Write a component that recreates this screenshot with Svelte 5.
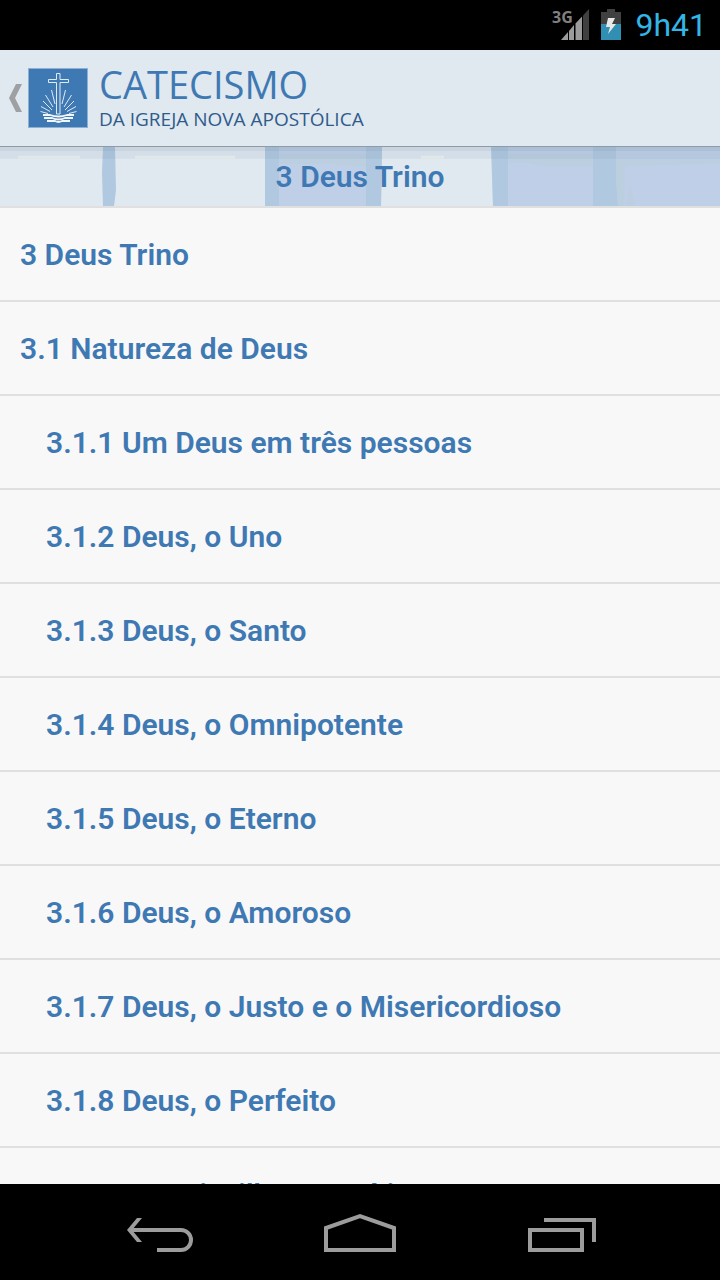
<script>
  const chapter = '3 Deus Trino';

  const sections = [
    { number: '3', title: 'Deus Trino', level: 1 },
    { number: '3.1', title: 'Natureza de Deus', level: 1 },
    { number: '3.1.1', title: 'Um Deus em três pessoas', level: 2 },
    { number: '3.1.2', title: 'Deus, o Uno', level: 2 },
    { number: '3.1.3', title: 'Deus, o Santo', level: 2 },
    { number: '3.1.4', title: 'Deus, o Omnipotente', level: 2 },
    { number: '3.1.5', title: 'Deus, o Eterno', level: 2 },
    { number: '3.1.6', title: 'Deus, o Amoroso', level: 2 },
    { number: '3.1.7', title: 'Deus, o Justo e o Misericordioso', level: 2 },
    { number: '3.1.8', title: 'Deus, o Perfeito', level: 2 },
    { number: '3.2', title: 'Deus - Pai, Filho e Espírito Santo', level: 1 },
  ];
</script>

<div class="screen">
  <div class="status-bar">
    <svg class="signal" width="38" height="34" viewBox="0 0 38 34" aria-hidden="true">
      <path d="M32 7.5 38 1V32H32Z" fill="#404040" />
      <path d="M10 32 17 24V32ZM18 23 23 17V32H18ZM24.5 15.5 31 8.5V32H24.5Z" fill="#9c9c9c" />
      <text x="1" y="15">3G</text>
    </svg>
    <svg class="battery" width="20" height="32" viewBox="0 0 20 32" aria-hidden="true">
      <path d="M6 0H14V3H20V15H0V3H6Z" fill="#404040" />
      <path d="M0 15H20V31H0Z" fill="#308fb3" />
      <path d="M7 9H14L11 15H15L7 25L9 18H5Z" fill="#e8e8e8" />
    </svg>
    <span class="clock">9h41</span>
  </div>

  <header class="app-bar">
    <button class="up" aria-label="Voltar">
      <svg class="chevron" width="14" height="28" viewBox="0 0 14 28">
        <path d="M8 0H14L7 14L14 28H8L1 14Z" fill="#9ea1a4" />
      </svg>
      <svg class="logo" width="60" height="60" viewBox="0 0 60 60">
        <rect x="0.5" y="0.5" width="59" height="59" fill="#3f79b3" stroke="#8eb0d3" />
        <g fill="none" stroke="#e0eaf4">
          <path d="M28.5 5.5H32V11.5H40.5V14.5H32V46H28.5V14.5H20.5V11.5H28.5Z" />
          <path
            d="M23.5 22 27 36M37.5 22 34 36M17.5 27 25 39M43.5 27 36 39M15 33 24 42M46 33 37 42M13 38.5 22 43.5M48 38.5 39 43.5M12.5 43.5 20 45.5M48.5 43.5 41 45.5"
          />
        </g>
        <g fill="none" stroke="#f0f5fa" stroke-width="1.8">
          <path d="M15 47H22Q30.5 50 39 47H46" />
          <path d="M16 50H24Q30.5 53 37 50H45" />
          <path d="M19 53H27Q30.5 55 34 53H42" />
        </g>
      </svg>
    </button>
    <h1 class="brand">
      <span class="brand-name">CATECISMO</span>
      <span class="brand-sub">DA IGREJA NOVA APOSTÓLICA</span>
    </h1>
  </header>

  <div class="chapter">
    <svg class="tiles" viewBox="0 0 720 60" preserveAspectRatio="none" aria-hidden="true">
      <rect width="720" height="60" fill="#e0e8f0" />
      <path d="M265 0H382L381 60H265ZM492 0H720V60H493Z" fill="#bfcfe8" />
      <path
        d="M103 0H115L116 44L114 60H103L102 26ZM265 0H279V60H265ZM366 0H382L381 60H366ZM491 0H508V60H493ZM593 0H616V30L618 60H593Z"
        fill="#b0c8e0"
      />
      <path d="M279 7H366V20L330 17H279ZM508 7H593V19H538L528 16H508ZM616 12H720V17L625 19L624 60H618L616 35ZM630 38 635 60H626Z" fill="#bbcfe0" />
      <path d="M0 0H720V12H0Z" fill="#50708c" opacity="0.08" />
      <path d="M18 9H80V12H18ZM135 9H235V12H135ZM421 9H444V12H421Z" fill="#e0e8e8" />
      <path d="M0 0H720V4H0Z" fill="#506070" opacity="0.08" />
    </svg>
    <h2>{chapter}</h2>
  </div>

  <main class="contents">
    <ul>
      {#each sections as section (section.number)}
        <li>
          <a href="#{section.number}" class:nested={section.level === 2}>
            {section.number} {section.title}
          </a>
        </li>
      {/each}
    </ul>
  </main>

  <nav class="system-bar">
    <button aria-label="Anterior">
      <svg width="72" height="44" viewBox="0 0 72 44">
        <path d="M9 20H59A10 10 0 0 1 59 40H35" />
        <path d="M15 8H20L10 20L20 32H15L5 20Z" class="solid" />
      </svg>
    </button>
    <button aria-label="Início">
      <svg width="72" height="44" viewBox="0 0 72 44">
        <path d="M2 40V18L36 6L70 18V40Z" />
      </svg>
    </button>
    <button aria-label="Recentes">
      <svg width="72" height="44" viewBox="0 0 72 44">
        <path d="M4 20H56V40H4ZM18 10H68V32" />
      </svg>
    </button>
  </nav>
</div>

<style>
  :global(body) {
    margin: 0;
    background-color: #000;
  }

  .screen {
    display: flex;
    flex-direction: column;
    height: 100vh;
    font-family: Roboto, 'Liberation Sans', sans-serif;
    color: #3f79b3;
    background-color: #f8f8f8;
  }

  .status-bar {
    display: flex;
    flex: none;
    align-items: center;
    justify-content: flex-end;
    height: 50px;
    padding-right: 13px;
    background-color: #000;
  }

  .signal {
    margin-right: 12px;
    overflow: visible;
  }

  .signal text {
    font-family: 'Open Sans', sans-serif;
    font-size: 16px;
    font-weight: 700;
    fill: #808080;
  }

  .battery {
    margin-right: 14px;
  }

  .clock {
    font-size: 32px;
    line-height: 50px;
    color: #33b5e5;
  }

  .app-bar {
    display: flex;
    flex: none;
    align-items: center;
    gap: 11px;
    height: 96px;
    padding-left: 8px;
    background-color: #e0e8f0;
    border-bottom: 1px solid #8f9ba7;
  }

  button {
    padding: 0;
    border: 0;
    background: none;
    cursor: pointer;
  }

  .up {
    display: flex;
    align-items: center;
    gap: 6px;
  }

  .brand {
    display: flex;
    flex-direction: column;
    margin: 0;
    font-family: 'Open Sans', 'Noto Sans', sans-serif;
    font-weight: 500;
    white-space: nowrap;
  }

  .brand-name {
    font-size: 38px;
    line-height: 42px;
  }

  .brand-sub {
    font-size: 19px;
    line-height: 28px;
    color: #2f5b8a;
  }

  .chapter {
    position: relative;
    flex: none;
    border-bottom: 2px solid #e0e0e0;
  }

  .tiles {
    position: absolute;
    inset: 0;
    width: 100%;
    height: 100%;
  }

  h2 {
    position: relative;
    margin: 0;
    font-size: 30px;
    font-weight: 600;
    line-height: 59px;
    text-align: center;
  }

  .contents {
    flex: 1;
    min-height: 0;
    overflow: hidden;
  }

  ul {
    margin: 0;
    padding: 0;
    list-style: none;
  }

  li {
    border-bottom: 2px solid #e0e0e0;
  }

  a {
    display: block;
    padding: 2px 20px 0;
    font-size: 30px;
    font-weight: 600;
    line-height: 90px;
    color: inherit;
    text-decoration: none;
    white-space: nowrap;
  }

  a.nested {
    padding-left: 46px;
  }

  .system-bar {
    display: flex;
    flex: none;
    align-items: center;
    justify-content: center;
    gap: 130px;
    height: 96px;
    background-color: #000;
  }

  .system-bar svg {
    display: block;
    fill: none;
    stroke: #9c9c9c;
    stroke-width: 4px;
  }

  .system-bar .solid {
    fill: #9c9c9c;
    stroke: none;
  }
</style>
